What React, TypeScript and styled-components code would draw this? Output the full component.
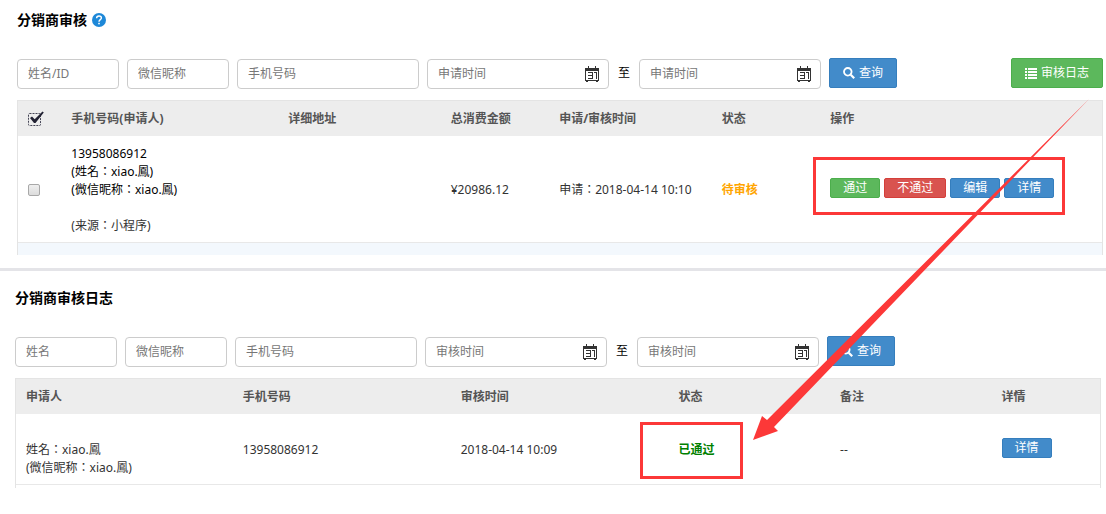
import React from "react";
import styled, { createGlobalStyle, css } from "styled-components";

const GlobalStyle = createGlobalStyle`
  *, *::before, *::after { box-sizing: border-box; }
  body {
    margin: 0;
    background: #fff;
    color: #333;
    font: 12px/18px "Noto Sans", "Noto Sans CJK SC", sans-serif;
  }
  button, input { font: inherit; }
`;

const Page = styled.main`
  position: relative;
`;

const Panel = styled.section<{ $log?: boolean }>`
  padding: ${(p) => (p.$log ? "17px 5px 0 15px" : "10px 3px 13px 17px")};
`;

const Divider = styled.hr`
  height: 3px;
  margin: 0;
  border: 0;
  background: #e4e4e8;
`;

const Title = styled.h1`
  display: flex;
  align-items: center;
  gap: 5px;
  margin: 0 0 28px;
  color: #000;
  font-size: 14px;
  line-height: 20px;
  font-weight: 700;
`;

const HelpLink = styled.a`
  display: flex;
`;

const FilterBar = styled.form`
  display: flex;
  align-items: flex-start;
  margin-bottom: 12px;
  gap: 8px;
`;

const Box = styled.label<{ $wide?: boolean }>`
  display: flex;
  align-items: center;
  width: ${(p) => (p.$wide ? "182px" : "102px")};
  height: 30px;
  margin: 1px 0 -1px;
  padding: 0 8px 0 10px;
  border: 1px solid #ccc;
  border-radius: 4px;
  background: #fff;
`;

const TextInput = styled.input`
  flex: 1;
  min-width: 0;
  padding: 0;
  border: 0;
  outline: 0;
  background: none;
  color: #333;
  line-height: 18px;
  &::placeholder { color: #777; opacity: 1; }
`;

const RangeWord = styled.span`
  width: 14px;
  padding: 0 1px;
  color: #000;
  line-height: 30px;
`;

const tones = {
  blue: css`background: #428bca; border-color: #357ebd;`,
  green: css`background: #5cb85c; border-color: #4cae4c;`,
  red: css`background: #d9534f; border-color: #d43f3a;`,
};

const Button = styled.button<{ $tone: keyof typeof tones; $small?: boolean }>`
  display: inline-flex;
  align-items: center;
  justify-content: center;
  gap: 4px;
  height: ${(p) => (p.$small ? "20px" : "30px")};
  padding: 0 ${(p) => (p.$small ? "12px" : "13px")};
  border: 1px solid;
  border-radius: 2px;
  color: #fff;
  line-height: 18px;
  white-space: nowrap;
  cursor: pointer;
  ${(p) => tones[p.$tone]}
`;

const PushRight = styled.div`
  margin-left: auto;
`;

const Table = styled.table`
  width: 100%;
  table-layout: fixed;
  border-collapse: separate;
  border-spacing: 0;
  border: solid #e4e4e4;
  border-width: 1px 1px 0;
`;

const Th = styled.th`
  height: 35px;
  padding: 0 0 0 10px;
  background: #ededed;
  color: #555;
  font-weight: 700;
  text-align: left;
  white-space: nowrap;
`;

const Td = styled.td`
  padding: 9px 0 7px 10px;
  border-bottom: 1px solid #e8e8e8;
  text-align: left;
  white-space: nowrap;
`;

const LogTd = styled(Td)<{ $control?: boolean }>`
  padding: ${(p) => (p.$control ? "24px" : "27px")} 0 7px 10px;
  vertical-align: top;
`;

const Spacer = styled.td<{ $tint?: boolean }>`
  height: ${(p) => (p.$tint ? "12px" : "3px")};
  padding: 0;
  background: ${(p) => (p.$tint ? "#f3f8fd" : "#fff")};
`;

const Person = styled.div<{ $dark?: boolean }>`
  color: ${(p) => (p.$dark ? "#000" : "inherit")};
  font-family: "Noto Sans", "Noto Sans CJK TC", sans-serif;
`;

const Source = styled(Person)`
  margin-top: 18px;
`;

const Status = styled.strong<{ $passed?: boolean }>`
  position: relative;
  color: ${(p) => (p.$passed ? "#008000" : "#ffa500")};
`;

const Actions = styled.div`
  position: relative;
  display: flex;
  width: fit-content;
  gap: 4px;
`;

const ActionTd = styled(Td)`
  padding-bottom: 11px;
`;

const Highlight = styled.span<{ $edges: string }>`
  position: absolute;
  inset: ${(p) => p.$edges};
  border: 3px solid #fc3838;
  pointer-events: none;
`;

const Checkbox = styled.input`
  display: block;
  appearance: none;
  width: 12px;
  height: 12px;
  margin: 0;
  border: 1px solid #a8a8a8;
  border-radius: 2px;
  background: linear-gradient(#efefef, #dcdcdc);
`;

const SelectAll = styled.button`
  display: block;
  padding: 0;
  border: 0;
  background: none;
  cursor: pointer;

  svg { display: block; }
`;

const Arrow = styled.svg`
  position: absolute;
  top: 98px;
  right: 16px;
  pointer-events: none;
`;

const HelpIcon = () => (
  <svg width="14" height="14" viewBox="0 0 14 14" aria-hidden="true">
    <circle cx="7" cy="7" r="7" fill="#1e88d8" />
    <path d="M4.6 5.3C4.6 3.8 5.6 3 7 3s2.4.8 2.4 2.1C9.4 6.6 7 6.7 7 8.7" fill="none" stroke="#fff" strokeWidth="1.4" />
    <rect x="6.2" y="9.8" width="1.6" height="1.5" fill="#fff" />
  </svg>
);

const CalendarIcon = () => (
  <svg width="16" height="16" viewBox="0 0 16 16" aria-hidden="true" fill="#333">
    <path d="M1 2h14v3H1zM4 0h1v3H4zM11 0h1v3h-1zM1 4h1v11H1zM14 4h1v11h-1zM1 14h14v1H1zM2 15h2v1H2zM12 15h2v1h-2z" />
    <path d="M4 6h5v7H4v-1h4v-2H4V9h4V7H4zM10 6h3v7h-1V7h-2z" />
  </svg>
);

const SearchIcon = () => (
  <svg width="12" height="12" viewBox="0 0 12 12" aria-hidden="true" fill="none" stroke="#fff">
    <circle cx="4.8" cy="4.8" r="3.8" strokeWidth="1.8" />
    <path d="M7.7 7.7l3.5 3.5" strokeWidth="2.2" />
  </svg>
);

const ListIcon = () => (
  <svg width="12" height="12" viewBox="0 0 12 12" aria-hidden="true" fill="#fff">
    <path d="M0 1h2v2H0zM0 4h2v2H0zM0 7h2v2H0zM0 10h2v2H0zM3 1h9v2H3zM3 4h9v2H3zM3 7h9v2H3zM3 10h9v2H3z" />
  </svg>
);

const SelectAllIcon = () => (
  <svg width="16" height="16" viewBox="0 0 16 16" aria-hidden="true">
    <rect x="0.5" y="2.5" width="12" height="12" rx="1" fill="none" stroke="#445" strokeDasharray="2 1" />
    <path d="M2 7l2-1.5 2.7 2.8L14.5.5l1.3.9L7.500 12H6z" fill="#223" />
  </svg>
);

type FieldProps = { label: string; wide?: boolean; calendar?: boolean };

const Field = ({ label, wide, calendar }: FieldProps) => (
  <Box $wide={wide}>
    <TextInput type="text" placeholder={label} aria-label={label} />
    {calendar && <CalendarIcon />}
  </Box>
);

type FiltersProps = { nameLabel: string; timeLabel: string; children?: React.ReactNode };

const Filters = ({ nameLabel, timeLabel, children }: FiltersProps) => (
  <FilterBar onSubmit={(e) => e.preventDefault()}>
    <Field label={nameLabel} />
    <Field label="微信昵称" />
    <Field label="手机号码" wide />
    <Field label={timeLabel} wide calendar />
    <RangeWord>至</RangeWord>
    <Field label={timeLabel} wide calendar />
    <Button type="submit" $tone="blue"><SearchIcon />查询</Button>
    {children}
  </FilterBar>
);

const Columns = ({ widths }: { widths: string[] }) => (
  <colgroup>
    {widths.map((width, i) => <col key={i} style={{ width }} />)}
  </colgroup>
);

export default function App() {
  return (
    <Page>
      <GlobalStyle />
      <Panel>
        <Title>
          分销商审核
          <HelpLink href="#help" aria-label="帮助"><HelpIcon /></HelpLink>
        </Title>
        <Filters nameLabel="姓名/ID" timeLabel="申请时间">
          <PushRight>
            <Button type="button" $tone="green"><ListIcon />审核日志</Button>
          </PushRight>
        </Filters>
        <Table>
          <Columns widths={["4%", "20%", "15%", "10%", "15%", "10%", "26%"]} />
          <thead>
            <tr>
              <Th><SelectAll type="button" aria-label="全选"><SelectAllIcon /></SelectAll></Th>
              <Th>手机号码(申请人)</Th>
              <Th>详细地址</Th>
              <Th>总消费金额</Th>
              <Th>申请/审核时间</Th>
              <Th>状态</Th>
              <Th>操作</Th>
            </tr>
          </thead>
          <tbody>
            <tr>
              <Td><Checkbox type="checkbox" aria-label="选择" /></Td>
              <Td>
                <Person $dark>13958086912</Person>
                <Person $dark>(姓名：xiao.鳳)</Person>
                <Person $dark>(微信昵称：xiao.鳳)</Person>
                <Source>(来源：小程序)</Source>
              </Td>
              <Td />
              <Td>¥20986.12</Td>
              <Td><Person>申请：2018-04-14 10:10</Person></Td>
              <Td><Status>待审核</Status></Td>
              <ActionTd>
                <Actions>
                  <Button type="button" $tone="green" $small>通过</Button>
                  <Button type="button" $tone="red" $small>不通过</Button>
                  <Button type="button" $tone="blue" $small>编辑</Button>
                  <Button type="button" $tone="blue" $small>详情</Button>
                  <Highlight $edges="-21px -11px -17px -17px" />
                </Actions>
              </ActionTd>
            </tr>
            <tr><Spacer colSpan={7} $tint /></tr>
          </tbody>
        </Table>
      </Panel>
      <Divider />
      <Panel $log>
        <Title as="h2">分销商审核日志</Title>
        <Filters nameLabel="姓名" timeLabel="审核时间" />
        <Table>
          <Columns widths={["20%", "20.1%", "20.1%", "14.9%", "14.9%", "10%"]} />
          <thead>
            <tr>
              <Th>申请人</Th>
              <Th>手机号码</Th>
              <Th>审核时间</Th>
              <Th>状态</Th>
              <Th>备注</Th>
              <Th>详情</Th>
            </tr>
          </thead>
          <tbody>
            <tr>
              <LogTd>
                <Person>姓名：xiao.鳳</Person>
                <Person>(微信昵称：xiao.鳳)</Person>
              </LogTd>
              <LogTd>13958086912</LogTd>
              <LogTd>2018-04-14 10:09</LogTd>
              <LogTd>
                <Status $passed>已通过<Highlight $edges="-19px -28px -21px -39px" /></Status>
              </LogTd>
              <LogTd>--</LogTd>
              <LogTd $control>
                <Actions><Button type="button" $tone="blue" $small>详情</Button></Actions>
              </LogTd>
            </tr>
            <tr><Spacer colSpan={6} /></tr>
          </tbody>
        </Table>
      </Panel>
      <Arrow width="337" height="343" viewBox="752 98 337 343" aria-hidden="true">
        <path d="M1088 99L773 427l4 4-25 9 9-24 5 4z" fill="#fc3838" />
      </Arrow>
    </Page>
  );
}
